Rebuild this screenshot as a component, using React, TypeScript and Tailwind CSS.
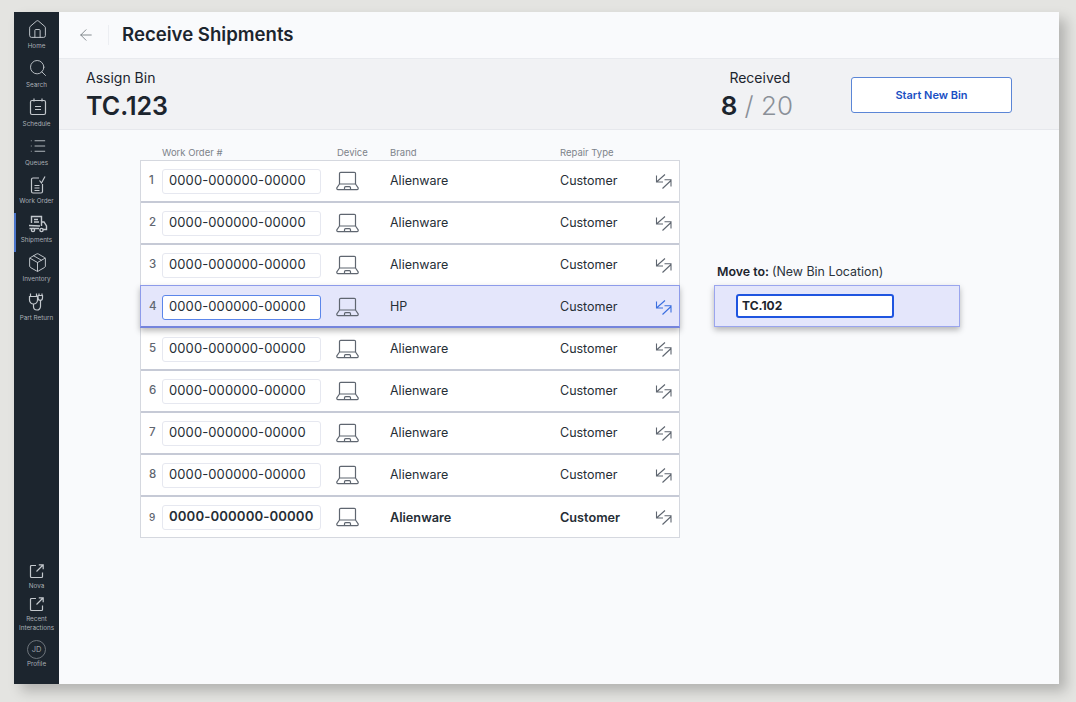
import React from "react";
import { ArrowLeft, Home, List, Package, Search } from "lucide-react";

const rows = [
  { n: 1, brand: "Alienware" },
  { n: 2, brand: "Alienware" },
  { n: 3, brand: "Alienware" },
  { n: 4, brand: "HP", active: true },
  { n: 5, brand: "Alienware" },
  { n: 6, brand: "Alienware" },
  { n: 7, brand: "Alienware" },
  { n: 8, brand: "Alienware" },
  { n: 9, brand: "Alienware", last: true },
];

const ScheduleIcon = () => (
  <svg width="20" height="20" viewBox="0 0 20 20" fill="none" stroke="currentColor" strokeWidth="1.2">
    <rect x="2.500" y="3.500" width="15" height="14" rx="1.500" />
    <path d="M6 1.500v3M14 1.500v3M7 9.500h6M7 12.500h6" />
  </svg>
);

const WorkOrderIcon = () => (
  <svg width="20" height="20" viewBox="0 0 20 20" fill="none" stroke="currentColor" strokeWidth="1.2">
    <path d="M11 3H5a1.500 1.500 0 0 0-1.500 1.500v12A1.500 1.500 0 0 0 5 18h8a1.500 1.500 0 0 0 1.500-1.500V9" />
    <path d="M11.500 5.500l2 2.500 3.500-6.500M6.500 10.500h5M6.500 13h5M6.500 15.500h5" />
  </svg>
);

const ShipmentsIcon = () => (
  <svg width="20" height="20" viewBox="0 0 20 20" fill="none" stroke="currentColor" strokeWidth="1.4">
    <path d="M3.500 9V2.500h10V12M1 11.500l11 .5M1.500 14.500H11M6 5.500h4M6 8h5" />
    <path d="M13.500 8H16l2.500 4v3.500H15" />
    <circle cx="5" cy="16" r="1.600" />
    <circle cx="13.500" cy="16" r="1.600" />
  </svg>
);

const PartReturnIcon = () => (
  <svg width="20" height="20" viewBox="0 0 20 20" fill="none" stroke="currentColor" strokeWidth="1.2">
    <path d="M2.500 1.500v3M8.500 1.500v3M1.500 4.500h8v3.500a4 4 0 0 1-8 0z" />
    <path d="M5.500 12v2.500a3.500 3.500 0 0 0 7 0V8" />
    <path d="M11 1.500v2M14 1.500v2M10 3.500h4.500V6a2.200 2.200 0 0 1-4.500 0z" />
  </svg>
);

const OpenIcon = () => (
  <svg width="16" height="16" viewBox="0 0 16 16" fill="none" stroke="currentColor" strokeWidth="1.2">
    <path d="M7 2.500H2.500A1 1 0 0 0 1.500 3.500v10a1 1 0 0 0 1 1h10a1 1 0 0 0 1-1V9.500" />
    <path d="M7.500 8.500L14 2M9.800 1.800h4.400v4.400" />
  </svg>
);

const LaptopIcon = () => (
  <svg width="23" height="20" viewBox="0 0 23 20" fill="none" stroke="#5f6670" strokeWidth="1.2" className="shrink-0">
    <path d="M3.500 13V2.500A1.200 1.200 0 0 1 4.700 1.300h13.600a1.200 1.200 0 0 1 1.200 1.200V13" />
    <path d="M3.500 13L.8 17v.6a1 1 0 0 0 1 1h19.400a1 1 0 0 0 1-1V17L19.500 13z" />
    <path d="M8.500 18.500v-1.800a1 1 0 0 1 1-1h4a1 1 0 0 1 1 1v1.800" />
  </svg>
);

const MoveIcon = ({ active }: { active?: boolean }) => (
  <svg width="18" height="17" viewBox="0 0 18 17" fill="none" stroke={active ? "#3a6fe0" : "#5f6670"} strokeWidth="1.1" className="shrink-0">
    <path d="M10 1.500L1.500 9M1.500 2.500V9H8" />
    <path d="M7.500 15.500L16 7.500M9.500 6.800H16v6.700" />
  </svg>
);

function NavItem({ icon, label, active }: { icon: React.ReactNode; label: string; active?: boolean }) {
  return (
    <div className={`flex h-[38.860px] w-full flex-col items-center justify-start border-l-2 ${active ? "border-[#4a74c9]" : "border-transparent"}`}>
      <div className="flex h-[21px] items-center text-[#c3c8cd]">{icon}</div>
      <span className="-ml-[2px] mt-[1px] whitespace-nowrap text-[6.300px] leading-[10px] text-[#aab0b6]">{label}</span>
    </div>
  );
}

function Sidebar() {
  return (
    <aside className="flex w-[45px] shrink-0 flex-col items-center bg-[#1c252e] pb-[15px] pt-[7px]">
      <NavItem icon={<Home size={21} strokeWidth={1.1} />} label="Home" />
      <NavItem icon={<Search size={20} strokeWidth={1.1} />} label="Search" />
      <NavItem icon={<ScheduleIcon />} label="Schedule" />
      <NavItem icon={<List size={18} strokeWidth={1.2} />} label="Queues" />
      <NavItem icon={<WorkOrderIcon />} label="Work Order" />
      <NavItem icon={<ShipmentsIcon />} label="Shipments" active />
      <NavItem icon={<Package size={21} strokeWidth={1.1} />} label="Inventory" />
      <NavItem icon={<PartReturnIcon />} label="Part Return" />
      <div className="mt-auto flex w-full flex-col items-center text-[#c3c8cd]">
        <OpenIcon />
        <span className="mt-[2px] text-[6.300px] leading-[10px] text-[#aab0b6]">Nova</span>
        <div className="mt-[5px]">
          <OpenIcon />
        </div>
        <span className="mt-[3.500px] text-center text-[6.300px] leading-[9px] text-[#aab0b6]">
          Recent
          <br />
          Interactions
        </span>
        <div className="mt-[7px] flex h-[19px] w-[19px] items-center justify-center rounded-full border border-[#6d747b] text-[7.500px] text-[#9aa0a6]">
          JD
        </div>
        <span className="text-[6.300px] leading-[10px] text-[#aab0b6]">Profile</span>
      </div>
    </aside>
  );
}

function Row({ n, brand, active, last }: { n: number; brand: string; active?: boolean; last?: boolean }) {
  const weight = last ? "font-semibold" : "font-normal";
  const box = active
    ? "z-10 -mx-px -mt-[2px] mb-[1px] h-[43px] border border-b-2 border-[#8d9bea] border-b-[#7484dc] bg-[#e4e6fb] pt-[2px] shadow-[0_3px_6px_rgba(0,0,0,0.28)]"
    : last
      ? "h-[40px]"
      : "h-[42px] border-b-2 border-[#c6cad6]";
  return (
    <div className={`relative flex items-center pl-[8px] text-[#262e36] ${last ? "text-[12.700px]" : "text-[12.500px]"} ${box}`}>
      <span className={`w-[13px] font-medium text-[#5f6670] ${last ? "text-[10px]" : "text-[11.500px]"}`}>{n}</span>
      <div
        className={`flex h-[25px] w-[159px] shrink-0 items-center whitespace-nowrap rounded-[3px] border bg-white pl-[6px] tracking-[0.1px] ${weight} ${
          last ? "text-[13.200px]" : "text-[13px]"
        } ${active ? "border-[#5b86ea]" : "border-[#e6e8f0]"}`}
      >
        0000-000000-00000
      </div>
      <div className="ml-[15px] w-[54px]">
        <LaptopIcon />
      </div>
      <span className={`w-[170px] pt-px ${weight}`}>{brand}</span>
      <span className={`w-[95px] pt-px ${weight}`}>Customer</span>
      <MoveIcon active={active} />
    </div>
  );
}

export default function App() {
  return (
    <div className="h-[702px] w-[1076px] overflow-hidden bg-[#e4e4e1] pl-[14px] pt-[12px] font-['Inter',sans-serif]">
      <div className="flex h-[672px] w-[1045px] bg-[#f9fafc] shadow-[7px_7px_12px_rgba(0,0,0,0.22)]">
        <Sidebar />
        <main className="flex min-w-0 flex-1 flex-col">
          <header className="flex h-[47px] items-center border-b border-[#e8eaee] pl-[18px]">
            <ArrowLeft size={18} strokeWidth={1.1} className="text-[#6d747b]" />
            <div className="ml-[13px] h-[20px] w-px bg-[#eceef2]" />
            <h1 className="ml-[13px] text-[18.600px] font-semibold text-[#1c252e]">Receive Shipments</h1>
          </header>
          <section className="flex h-[71px] items-center border-b border-[#e6e8ec] bg-[#f1f2f4] pl-[27px] pr-[47px] text-[#1c252e]">
            <div className="pt-[2px]">
              <div className="text-[14px] leading-[18px]">Assign Bin</div>
              <div className="mt-[4px] text-[25px] font-semibold leading-[30px]">TC.123</div>
            </div>
            <div className="ml-auto mr-[58px] pt-[1px] text-center">
              <div className="pl-[6px] text-[14px] leading-[18px]">Received</div>
              <div className="mt-[4px] text-[26px] leading-[30px]">
                <span className="font-semibold">8</span>
                <span className="font-light text-[#8a9098]"> / 20</span>
              </div>
            </div>
            <button className="mt-[2px] h-[36px] w-[161px] rounded-[3px] border border-[#5b86d6] bg-white text-[11px] font-semibold text-[#1a4fc4]">
              Start New Bin
            </button>
          </section>
          <div className="flex pl-[81px] pt-[14px]">
            <div className="w-[540px]">
              <div className="flex h-[16px] items-center pt-px text-[9.500px] leading-none text-[#7d838a]">
                <span className="ml-[22px] w-[175px]">Work Order #</span>
                <span className="w-[53px]">Device</span>
                <span className="w-[170px]">Brand</span>
                <span>Repair Type</span>
              </div>
              <div className="border border-[#d5d8df] bg-white">
                {rows.map((r) => (
                  <Row key={r.n} {...r} />
                ))}
              </div>
            </div>
            <div className="ml-[34px] mt-[119px] w-[246px]">
              <div className="flex h-[22px] items-start pl-[3px] text-[12.400px] text-[#2b333b]">
                <span className="font-semibold text-[#1c252e]">Move to:</span>
                <span className="ml-[3px]">(New Bin Location)</span>
              </div>
              <div className="flex h-[42px] items-center border border-[#9aa5ee] bg-[#e4e6fb] pl-[21px] shadow-[0_3px_6px_rgba(0,0,0,0.28)]">
                <div className="flex h-[24px] w-[158px] items-center rounded-[3px] border-2 border-[#1f55e0] bg-white pl-[4px] text-[12px] font-bold text-[#1c252e]">
                  TC.102
                </div>
              </div>
            </div>
          </div>
        </main>
      </div>
    </div>
  );
}
